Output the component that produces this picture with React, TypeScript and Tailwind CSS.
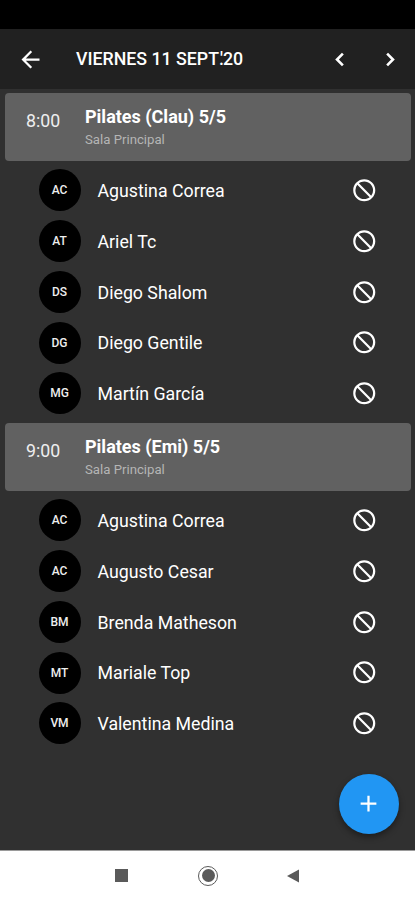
import { MdAdd, MdArrowBack, MdBlock } from "react-icons/md";

type Session = {
  time: string;
  title: string;
  room: string;
  people: { initials: string; name: string }[];
};

const sessions: Session[] = [
  {
    time: "8:00",
    title: "Pilates (Clau) 5/5",
    room: "Sala Principal",
    people: [
      { initials: "AC", name: "Agustina Correa" },
      { initials: "AT", name: "Ariel Tc" },
      { initials: "DS", name: "Diego Shalom" },
      { initials: "DG", name: "Diego Gentile" },
      { initials: "MG", name: "Martín García" },
    ],
  },
  {
    time: "9:00",
    title: "Pilates (Emi) 5/5",
    room: "Sala Principal",
    people: [
      { initials: "AC", name: "Agustina Correa" },
      { initials: "AC", name: "Augusto Cesar" },
      { initials: "BM", name: "Brenda Matheson" },
      { initials: "MT", name: "Mariale Top" },
      { initials: "VM", name: "Valentina Medina" },
    ],
  },
];

function Chevron({ className }: { className?: string }) {
  return (
    <svg className={className} viewBox="0 0 24 24" fill="none" stroke="currentColor" strokeWidth="2.3">
      <path d="M15 6.8 9.8 12l5.2 5.2" />
    </svg>
  );
}

function Header() {
  return (
    <header className="flex h-[60px] shrink-0 items-center bg-[#212121] pr-[11px] pl-[17px]">
      <button aria-label="Volver">
        <MdArrowBack className="size-[27px]" />
      </button>
      <h1 className="ml-8 flex-1 pt-px text-[17.75px] font-medium whitespace-nowrap">
        VIERNES 11 SEPT<span className="tracking-[-4px]">.</span>'20
      </h1>
      <button aria-label="Anterior">
        <Chevron className="size-[27px]" />
      </button>
      <button aria-label="Siguiente" className="ml-6">
        <Chevron className="size-[27px] rotate-180" />
      </button>
    </header>
  );
}

function SessionBlock({ session }: { session: Session }) {
  return (
    <section className="h-[330px]">
      <div className="mr-1 ml-[5px] flex h-[68px] rounded bg-[#616161] pl-[21px]">
        <span className="w-[59px] pt-4 text-[17.75px] leading-6 text-[#eeeeee]">{session.time}</span>
        <div className="pt-3">
          <h2 className="text-[18px] leading-6 font-bold">{session.title}</h2>
          <p className="text-[13.2px] leading-[22px] text-[#b5b5b5]">{session.room}</p>
        </div>
      </div>
      <ul className="pt-[4.5px]">
        {session.people.map((person) => (
          <li key={person.name} className="flex h-[50.75px] items-center pr-[37.5px] pl-[38.5px]">
            <div className="flex size-[42px] items-center justify-center rounded-full bg-black text-[12px] font-medium text-[#eeeeee]">
              {person.initials}
            </div>
            <span className="ml-[17px] flex-1 pt-[2px] text-[17.75px]">{person.name}</span>
            <MdBlock className="size-[26.5px] -scale-x-100" />
          </li>
        ))}
      </ul>
    </section>
  );
}

function NavigationBar() {
  return (
    <nav className="flex h-[50px] shrink-0 items-center border-t border-[#9a9a9a] bg-white pl-[115px] text-[#5a5a5a]">
      <div className="size-[13px] bg-current" />
      <div className="ml-[70px] flex size-[20px] items-center justify-center rounded-full border border-current">
        <div className="size-[13px] rounded-full bg-current" />
      </div>
      <svg className="ml-[69px] h-[14px] w-[12px]" viewBox="0 0 12 14" fill="currentColor">
        <path d="M0 7 12 .5v13z" />
      </svg>
    </nav>
  );
}

export default function App() {
  return (
    <div className="relative flex h-[900px] w-[415px] flex-col overflow-hidden bg-[#303030] font-[Roboto,sans-serif] text-white">
      <div className="h-[29px] shrink-0 bg-black" />
      <Header />
      <main className="flex-1 overflow-hidden pt-[3.5px]">
        {sessions.map((session) => (
          <SessionBlock key={session.time} session={session} />
        ))}
      </main>
      <NavigationBar />
      <button
        aria-label="Agregar"
        className="absolute right-[16.5px] bottom-[66.5px] flex size-[59.5px] items-center justify-center rounded-full bg-[#2196f3] shadow-[0_3px_6px_rgba(0,0,0,0.4)]"
      >
        <MdAdd className="size-[27px]" />
      </button>
    </div>
  );
}
